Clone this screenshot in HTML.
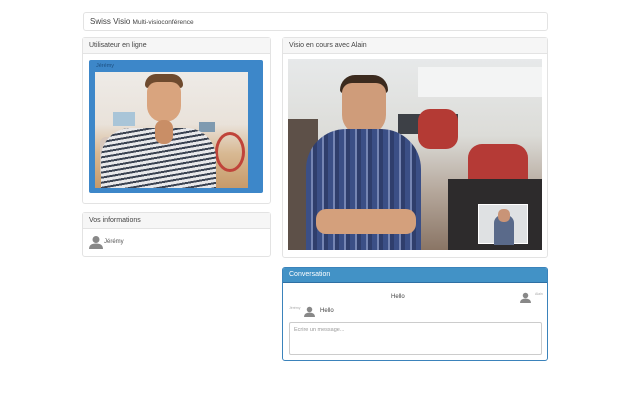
<!DOCTYPE html>
<html><head><style>
*{margin:0;padding:0;box-sizing:border-box}
body{width:640px;height:400px;background:#fff;font-family:"Liberation Sans",sans-serif;position:relative;overflow:hidden;color:#333}
.a{position:absolute}
.panel{position:absolute;border:1px solid #e3e3e3;border-radius:3px;background:#fff}
.ph{height:16px;background:#f6f6f6;border-bottom:1px solid #e3e3e3;font-size:7px;line-height:15px;padding-left:6px;color:#444}
</style></head><body>
<div class="panel" style="left:83px;top:12px;width:465px;height:19px;font-size:8px;line-height:17px;padding-left:6px;color:#444">Swiss Visio <span style="font-size:6.5px">Multi-visioconférence</span></div>

<div class="panel" style="left:82px;top:37px;width:189px;height:157px;height:167px">
 <div class="ph">Utilisateur en ligne</div>
</div>
<div class="a" style="left:89px;top:60px;width:174px;height:133px;background:#3d87c9;border-radius:2px"></div>
<div class="a" style="left:96px;top:63px;font-size:5.5px;color:#1d4f80">Jérémy</div>
<div class="a" style="left:95px;top:72px;width:153px;height:116px;background:linear-gradient(180deg,#eeebe7 0%,#e9e2da 45%,#d8b993 70%,#c79a6a 100%);overflow:hidden">
 <div class="a" style="left:18px;top:40px;width:22px;height:14px;background:#a9c5d8"></div>
 <div class="a" style="left:104px;top:50px;width:16px;height:10px;background:#7f9ab0"></div>
 <div class="a" style="left:120px;top:60px;width:30px;height:40px;border:3px solid #c0443a;border-radius:50%"></div>
 <div class="a" style="left:5px;top:65px;width:20px;height:40px;background:#d7c7bc;border-radius:6px"></div>
 <div class="a" style="left:50px;top:2px;width:38px;height:14px;background:#6e4a2e;border-radius:14px 14px 4px 4px"></div>
 <div class="a" style="left:52px;top:10px;width:34px;height:40px;background:#d9a47e;border-radius:10px 10px 16px 16px"></div>
 <div class="a" style="left:6px;top:56px;width:115px;height:70px;background:repeating-linear-gradient(170deg,#e8e8ea 0 3px,#3b4352 3px 5px);border-radius:30px 30px 0 0"></div>
 <div class="a" style="left:60px;top:48px;width:18px;height:24px;background:#c98e66;border-radius:8px"></div>
</div>

<div class="panel" style="left:82px;top:212px;width:189px;height:45px">
 <div class="ph">Vos informations</div>
 <svg class="a" style="left:6px;top:22px" width="14" height="14" viewBox="0 0 14 14"><circle cx="7" cy="4.5" r="3.5" fill="#888"/><path d="M0 14 Q0 8.5 7 8.5 Q14 8.5 14 14Z" fill="#888"/></svg>
 <div class="a" style="left:21px;top:26px;font-size:6px;color:#555">Jérémy</div>
</div>

<div class="panel" style="left:282px;top:37px;width:266px;height:221px">
 <div class="ph">Visio en cours avec Alain</div>
</div>
<div class="a" style="left:288px;top:59px;width:254px;height:191px;background:linear-gradient(180deg,#e7e9ea 0%,#dcdcd8 40%,#b4a69a 70%,#8a7565 100%);overflow:hidden">
 <div class="a" style="left:130px;top:8px;width:124px;height:30px;background:#f3f4f4"></div>
 <div class="a" style="left:110px;top:55px;width:60px;height:20px;background:#3d4046"></div>
 <div class="a" style="left:130px;top:50px;width:40px;height:40px;background:#b43a34;border-radius:12px"></div>
 <div class="a" style="left:180px;top:85px;width:60px;height:50px;background:#b53a36;border-radius:14px 14px 0 0"></div>
 <div class="a" style="left:160px;top:120px;width:94px;height:71px;background:#2d2b2c"></div>
 <div class="a" style="left:0;top:60px;width:30px;height:131px;background:#5d5048"></div>
 <div class="a" style="left:52px;top:16px;width:48px;height:18px;background:#3b2a1e;border-radius:20px 20px 4px 4px"></div>
 <div class="a" style="left:54px;top:24px;width:44px;height:52px;background:#cf9c7a;border-radius:10px 10px 20px 20px"></div>
 <div class="a" style="left:18px;top:70px;width:115px;height:121px;background:repeating-linear-gradient(90deg,#3b4f86 0 5px,#7585b3 5px 7px,#2f3e6c 7px 11px);border-radius:40px 40px 0 0"></div>
 <div class="a" style="left:28px;top:150px;width:100px;height:25px;background:#d4a07c;border-radius:10px"></div>
 <div class="a" style="left:190px;top:145px;width:50px;height:40px;background:#dfe1e3;border:1px solid #fff"><div class="a" style="left:15px;top:10px;width:20px;height:30px;background:#5a6a8a;border-radius:8px 8px 0 0"></div><div class="a" style="left:19px;top:4px;width:12px;height:13px;background:#c99477;border-radius:5px"></div></div>
</div>

<div class="a" style="left:282px;top:267px;width:266px;height:94px;border:1px solid #3b83bb;border-radius:3px;background:#fff;overflow:hidden">
 <div style="height:15px;background:#4292c6;border-bottom:1px solid #2e6fa3;color:#fff;font-size:7px;line-height:14px;padding-left:6px">Conversation</div>
 <div class="a" style="left:108px;top:26px;font-size:6px;color:#444">Hello</div>
 <svg class="a" style="left:237px;top:24px" width="11" height="11" viewBox="0 0 14 14"><circle cx="7" cy="4.5" r="3.5" fill="#888"/><path d="M0 14 Q0 8.5 7 8.5 Q14 8.5 14 14Z" fill="#888"/></svg>
 <div class="a" style="left:252px;top:24px;font-size:3.5px;color:#aaa">Alain</div>
 <div class="a" style="left:6px;top:38px;font-size:3.5px;color:#aaa">Jérémy</div>
 <svg class="a" style="left:21px;top:38px" width="11" height="11" viewBox="0 0 14 14"><circle cx="7" cy="4.5" r="3.5" fill="#888"/><path d="M0 14 Q0 8.5 7 8.5 Q14 8.5 14 14Z" fill="#888"/></svg>
 <div class="a" style="left:37px;top:40px;font-size:6px;color:#444">Hello</div>
 <div class="a" style="left:6px;top:54px;width:253px;height:33px;border:1px solid #ccc;border-radius:2px;font-size:5.5px;color:#999;padding:4px 4px">Ecrire un message...</div>
</div>
</body></html>
